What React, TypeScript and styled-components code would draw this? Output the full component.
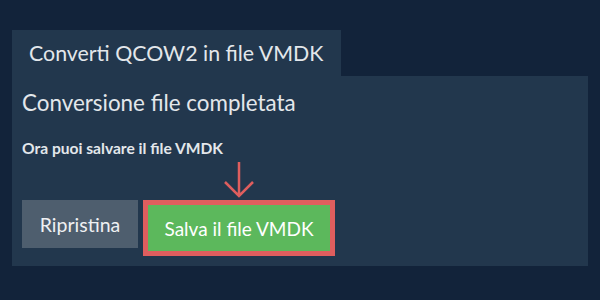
import React from "react";
import styled, { createGlobalStyle } from "styled-components";

const Global = createGlobalStyle`
  html, body { margin: 0; padding: 0; background: #12233a; }
  body { font-family: Lato, "Open Sans", sans-serif; }
`;

const Page = styled.div`
  width: 600px;
  height: 300px;
  box-sizing: border-box;
  padding: 30px 12px 0 12px;
  background: #12233a;
  display: flex;
  flex-direction: column;
  align-items: flex-start;
`;

const Tab = styled.div`
  height: 46px;
  width: 329px;
  box-sizing: border-box;
  padding-left: 17px;
  display: flex;
  align-items: center;
  background: #22374d;
  color: #e3e7eb;
  font-size: 21.35px;
`;

const Panel = styled.div`
  width: 576px;
  height: 190px;
  box-sizing: border-box;
  background: #22374d;
  padding: 12px 10px 0 10px;
  display: flex;
  flex-direction: column;
`;

const Heading = styled.div`
  color: #e3e7eb;
  font-size: 22.4px;
  line-height: 30px;
`;

const Sub = styled.div`
  margin-top: 20px;
  color: #e3e7eb;
  font-size: 15.6px;
  font-weight: 700;
  line-height: 20px;
`;

const Row = styled.div`
  margin-top: 4px;
  display: flex;
  align-items: flex-start;
  gap: 5px;
`;

const ButtonCol = styled.div`
  display: flex;
  flex-direction: column;
  align-items: center;
`;

const Reset = styled.div`
  margin-top: 38px;
  width: 116px;
  height: 48px;
  box-sizing: border-box;
  display: flex;
  align-items: center;
  justify-content: center;
  background: #4e5e6e;
  color: #eef0f2;
  font-size: 19.5px;
`;

const Highlight = styled.div`
  border: 5px solid #df5e5e;
`;

const Save = styled.div`
  width: 182px;
  height: 46px;
  box-sizing: border-box;
  display: flex;
  align-items: center;
  justify-content: center;
  background: #5cb85c;
  color: #ffffff;
  font-size: 19px;
`;

const Arrow = () => (
  <svg width="32" height="38" viewBox="0 0 32 38" style={{ display: "block" }}>
    <path d="M16 0 V34 M2 20 L16 34 L30 20" fill="none" stroke="#df5e5e" strokeWidth="2.5" />
  </svg>
);

export default function App() {
  return (
    <>
      <Global />
      <Page>
        <Tab>Converti QCOW2 in file VMDK</Tab>
        <Panel>
          <Heading>Conversione file completata</Heading>
          <Sub>Ora puoi salvare il file VMDK</Sub>
          <Row>
            <Reset>Ripristina</Reset>
            <ButtonCol>
              <Arrow />
              <Highlight>
                <Save>Salva il file VMDK</Save>
              </Highlight>
            </ButtonCol>
          </Row>
        </Panel>
      </Page>
    </>
  );
}
